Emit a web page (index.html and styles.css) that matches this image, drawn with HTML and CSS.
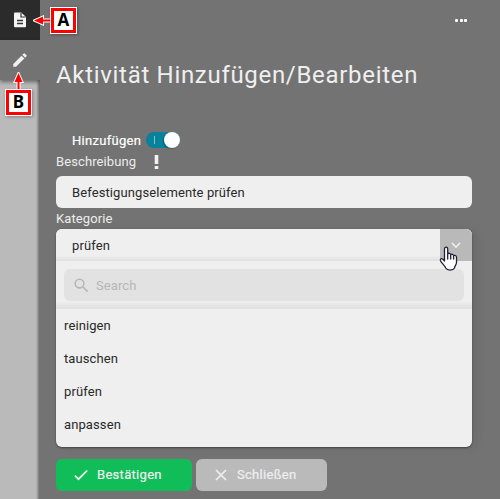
FILE: index.html
```html
<!DOCTYPE html>
<html lang="de">
<head>
<meta charset="utf-8">
<title>Aktivität Hinzufügen/Bearbeiten</title>
<link rel="stylesheet" href="styles.css">
</head>
<body>
<div class="app">
  <nav class="sidebar">
    <div class="tab tab-dark">
      <svg width="16" height="16" viewBox="0 0 16 16"><path d="M3 .5h6.200L14 5v9.500q0 .8-.8.8H3q-1 0-1-1V1.500q0-1 1-1z" fill="#f4f4f4"/><path d="M9 1v4h4.500" fill="none" stroke="#333" stroke-width="1.200"/><path d="M5 8.500h6M5 11.500h6" stroke="#333" stroke-width="1.300"/></svg>
    </div>
    <div class="tab tab-edit">
      <svg width="18" height="18" viewBox="0 0 24 24"><path fill="#efefef" d="M3 17.250V21h3.750L17.810 9.940l-3.750-3.750L3 17.250zM20.710 7.040a1 1 0 0 0 0-1.410l-2.340-2.340a1 1 0 0 0-1.410 0l-1.830 1.830 3.750 3.750 1.830-1.830z"/></svg>
    </div>
  </nav>
  <main class="panel">
    <div class="topbar"><span class="dots"><i></i><i></i><i></i></span></div>
    <h1>Aktivität Hinzufügen/Bearbeiten</h1>
    <div class="toggle-row"><span>Hinzufügen</span><span class="switch"><i class="tick"></i><i class="knob"></i></span></div>
    <div class="label desc"><span>Beschreibung</span><svg width="5" height="14" viewBox="0 0 5 14"><path d="M.7 0h3.600v9H.7zM.7 11h3.600v3H.7z" fill="#f2f2f2"/></svg></div>
    <div class="field">Befestigungselemente prüfen</div>
    <div class="label cat">Kategorie</div>
    <div class="select">
      <div class="select-head"><span>prüfen</span><div class="arrow"><svg width="10" height="7" viewBox="0 0 10 7"><path d="M.9 1 5 5l4.100-4" fill="none" stroke="#eee" stroke-width="1.700"/></svg></div></div>
      <div class="search-wrap"><div class="search"><svg width="19" height="19" viewBox="0 0 24 24"><path fill="#b7b7b7" d="M15.500 14h-.79l-.28-.27A6.470 6.470 0 0 0 16 9.500 6.500 6.500 0 1 0 9.500 16c1.610 0 3.090-.59 4.230-1.570l.27.28v.79l5 4.990L20.490 19l-4.990-5zm-6 0a4.500 4.500 0 1 1 0-9 4.500 4.500 0 0 1 0 9z"/></svg><span>Search</span></div></div>
      <ul class="options"><li>reinigen</li><li>tauschen</li><li>prüfen</li><li>anpassen</li></ul>
    </div>
    <div class="buttons">
      <div class="btn ok"><svg width="14" height="12" viewBox="0 0 14 12"><path d="M.8 6.500 4.500 10.200 13.200 1.500" fill="none" stroke="#f3fff5" stroke-width="1.700"/></svg><span>Bestätigen</span></div>
      <div class="btn close"><svg width="12" height="12" viewBox="0 0 12 12"><path d="M1 1l10 10M11 1 1 11" stroke="#efefef" stroke-width="1.700"/></svg><span>Schließen</span></div>
    </div>
  </main>
  <div class="callout callout-a"><svg width="18" height="11" viewBox="0 0 18 11"><path d="M1 5.500 10 1.500v3h8v2h-8v3z" fill="red" stroke="#fff" stroke-width="2" paint-order="stroke"/></svg><b>A</b></div>
  <div class="callout callout-b"><svg width="11" height="18" viewBox="0 0 11 18"><path d="M5.500 1 1.500 10h3v8h2v-8h3z" fill="red" stroke="#fff" stroke-width="2" paint-order="stroke"/></svg><b>B</b></div>
  <svg class="cursor" width="20" height="26" viewBox="0 0 20 26"><path d="M5.500 15V3.200C5.500.5 8.700.5 8.700 3.200V8c.6-1.200 2.900-.9 3 .8.800-1 2.800-.7 2.900.9 1-.8 2.900-.3 2.900 1.600v5.200c0 2.400-2 3.700-2 5.500-1.500 2.700-7.200 2.700-8.800 0-.6-2.600-4-4.300-5.200-7.200-.7-1.900 1.100-2.900 2.400-1.500zM8.700 8v5M11.700 8.800V13M14.600 9.700V13" fill="#fff" stroke="#202033" stroke-width="1.300" stroke-linejoin="round" stroke-linecap="round"/></svg>
</div>
</body>
</html>
```
FILE: styles.css
```css
* { box-sizing: border-box; }
body { margin: 0; font: 13px/16px Roboto, sans-serif; letter-spacing: .1px; color: #292929; }
.app { position: relative; display: flex; width: 500px; height: 499px; overflow: hidden; background: #737373; }
.sidebar { width: 40px; background: #bababa; }
.tab { height: 40px; display: flex; align-items: center; justify-content: center; }
.tab-dark { background: #2b2b2b; }
.tab-edit { background: #737373; box-shadow: 0 2px 4px rgba(0,0,0,.45); }
.panel { position: relative; flex: 1; padding: 0 28px 0 16px; background: #737373; }
.panel::before { content: ""; position: absolute; left: -4px; top: 80px; bottom: 0; width: 4px; background: linear-gradient(90deg, transparent, rgba(0,0,0,.45)); }
.topbar { height: 40px; display: flex; align-items: center; justify-content: flex-end; padding-right: 5px; }
.dots { display: flex; gap: 1.500px; }
.dots i { width: 3px; height: 3px; border-radius: 1px; background: #fff; }
h1 { margin: 19px 0 0; font-size: 24px; line-height: 32px; font-weight: 400; letter-spacing: .690px; color: #efefef; white-space: nowrap; }
.toggle-row { height: 16px; margin: 41px 0 0 16px; display: flex; align-items: center; color: #fff; letter-spacing: .3px; }
.toggle-row > span:first-child { width: 74px; padding-top: 1px; -webkit-text-stroke: .2px #fff; }
.switch { position: relative; width: 34px; height: 16px; border-radius: 8px; background: #08819a; }
.tick { position: absolute; left: 8px; top: 4px; width: 1px; height: 8px; background: #89bdc8; }
.knob { position: absolute; right: 0; top: 0; width: 16px; height: 16px; border-radius: 50%; background: #fff; box-shadow: -1px 1px 1px rgba(0,0,0,.25); }
.label { color: #ededed; height: 16px; }
.desc { display: flex; align-items: center; margin-top: 6px; }
.desc span { width: 98px; }
.field { height: 32px; margin-top: 6px; padding: 9px 16px 7px; border-radius: 6px; background: #efefef; }
.cat { margin-top: 3px; }
.select { height: 218px; margin-top: 2px; border-radius: 6px; background: #efefef; overflow: hidden; box-shadow: 0 1px 2px rgba(0,0,0,.4), 4px 0 10px rgba(0,0,0,.08); }
.select-head { height: 32px; padding-left: 16px; display: flex; align-items: center; justify-content: space-between; background: linear-gradient(#efefef 26px, #e0e0e0); }
.select-head > span { padding-top: 2px; }
.arrow { width: 32px; height: 32px; display: flex; align-items: center; justify-content: center; background: #b9b9b9; }
.search-wrap { height: 48px; padding: 8px 8px; background: linear-gradient(#efefef 40px, #e0e0e0); }
.search { height: 32px; display: flex; align-items: center; gap: 5px; padding-left: 8px; border-radius: 6px; background: #e2e2e2; color: #b7b7b7; }
.search span { padding-top: 2px; }
.options { list-style: none; margin: 0; padding: 0 8px; }
.options li { height: 33px; line-height: 33px; }
.buttons { display: flex; gap: 4px; margin-top: 12px; }
.btn { height: 32px; display: flex; align-items: center; border-radius: 6px; color: #efefef; letter-spacing: .3px; -webkit-text-stroke: .2px #efefef; }
.ok { width: 136px; padding-left: 18px; gap: 9px; background: #11bd58; }
.close { width: 131px; padding-left: 19px; gap: 10px; background: #bababa; }
.callout { position: absolute; display: flex; align-items: center; }
.callout b { width: 25px; height: 25px; border: 3px solid red; outline: 1px solid #fff; background: #fff; color: #000; font: 700 17px/18px "Noto Sans", sans-serif; letter-spacing: 0; text-align: center; box-shadow: 1px 1px 3px 1px rgba(0,0,0,.3); }
.callout-a { left: 33px; top: 8px; }
.callout-b { left: 6px; top: 72px; flex-direction: column; }
.cursor { position: absolute; left: 439px; top: 246px; }
```
